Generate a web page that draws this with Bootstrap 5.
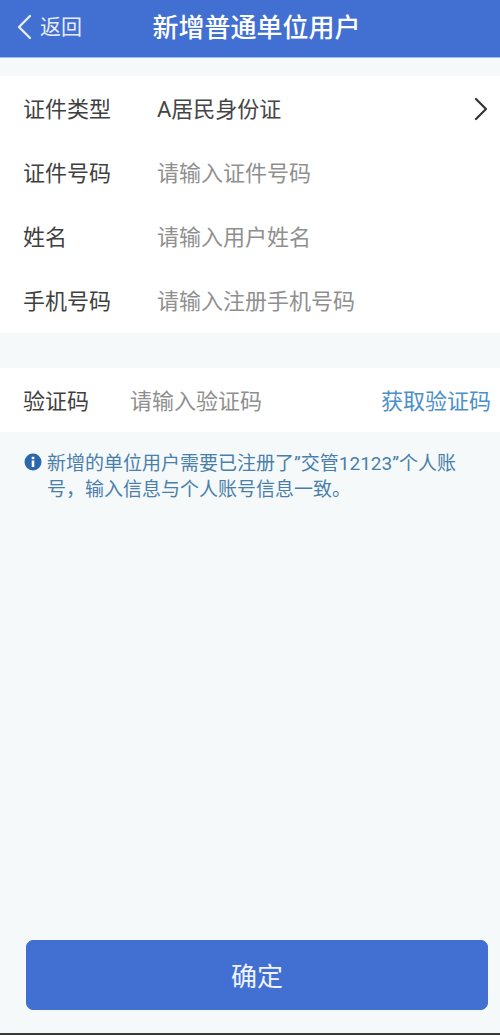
<!DOCTYPE html>
<html lang="zh">
<head>
<meta charset="utf-8">
<title>新增普通单位用户</title>
<link href="https://cdn.jsdelivr.net/npm/bootstrap@5.3.0/dist/css/bootstrap.min.css" rel="stylesheet">
<style>
html,body{height:100%}
body{font-family:Roboto,"Noto Sans CJK SC",sans-serif;background:#f5f9fa;font-size:22px;color:#3f3f3f;overflow:hidden}
.screen{height:1035px;border-bottom:2px solid #3a3a3a}
.topbar{height:58px;background:#426fd2;border-bottom:1px solid #9dbcf0;color:#fff}
.back-zone{left:17px;top:13px;gap:8px;color:#e6ecfa;font-size:21px;line-height:28px}
.top-title{font-size:26px;font-weight:500;line-height:57px;padding-left:13px}
.panel-a{margin-top:18px;height:257px}
.panel-b{margin-top:35px;height:64px}
.form-line{height:64.25px;padding:2px 9px 0 23px}
.form-name{width:134px;flex:none}
.form-name-sm{width:107px;flex:none}
.hint-text{color:#8f8f8f}
.value-text{color:#454545}
.send-link{color:#4d8fc7}
.more-mark{margin-right:3px}
.note-area{padding:19px 40px 0 24px;gap:5px;font-size:19px;line-height:26px;color:#4a7faa}
.note-icon{flex:none;margin-top:2px}
.foot-zone{padding:0 12px 23px 26px}
.ok-btn{height:70px;padding-top:10px;background:#426fd2;border-color:#426fd2;color:#eef3fd;font-size:26px;border-radius:7px}
</style>
</head>
<body>
<div class="screen d-flex flex-column">
  <header class="topbar position-relative text-center flex-none">
    <div class="back-zone position-absolute d-flex align-items-center">
      <svg width="15" height="26" viewBox="0 0 15 26" fill="none" stroke="#e6ecfa" stroke-width="2.4" stroke-linecap="round" stroke-linejoin="round" aria-hidden="true"><path d="M13 2 2 13l11 11"/></svg>
      <span>返回</span>
    </div>
    <div class="top-title">新增普通单位用户</div>
  </header>

  <section class="panel-a bg-white">
    <div class="form-line d-flex align-items-center">
      <span class="form-name">证件类型</span>
      <span class="value-text flex-grow-1">A居民身份证</span>
      <svg class="more-mark" width="15" height="24" viewBox="0 0 15 24" fill="none" stroke="#333" stroke-width="2.2" stroke-linecap="round" stroke-linejoin="round" aria-hidden="true"><path d="M3 2l10 10L3 22"/></svg>
    </div>
    <div class="form-line d-flex align-items-center">
      <span class="form-name">证件号码</span>
      <span class="hint-text">请输入证件号码</span>
    </div>
    <div class="form-line d-flex align-items-center">
      <span class="form-name">姓名</span>
      <span class="hint-text">请输入用户姓名</span>
    </div>
    <div class="form-line d-flex align-items-center">
      <span class="form-name">手机号码</span>
      <span class="hint-text">请输入注册手机号码</span>
    </div>
  </section>

  <section class="panel-b bg-white">
    <div class="form-line d-flex align-items-center">
      <span class="form-name-sm">验证码</span>
      <span class="hint-text flex-grow-1">请输入验证码</span>
      <span class="send-link">获取验证码</span>
    </div>
  </section>

  <div class="note-area d-flex align-items-start">
    <svg class="note-icon" width="18" height="18" viewBox="0 0 18 18" aria-hidden="true"><circle cx="9" cy="9" r="8.5" fill="#2c66ad"/><rect x="7.7" y="7.5" width="2.6" height="6.5" fill="#fff"/><rect x="7.7" y="3.8" width="2.6" height="2.4" fill="#fff"/></svg>
    <div>新增的单位用户需要已注册了”交管12123”个人账号，输入信息与个人账号信息一致。</div>
  </div>

  <div class="foot-zone mt-auto">
    <button type="button" class="btn ok-btn w-100">确定</button>
  </div>
</div>
<script src="https://cdn.jsdelivr.net/npm/bootstrap@5.3.0/dist/js/bootstrap.bundle.min.js"></script>
</body>
</html>
